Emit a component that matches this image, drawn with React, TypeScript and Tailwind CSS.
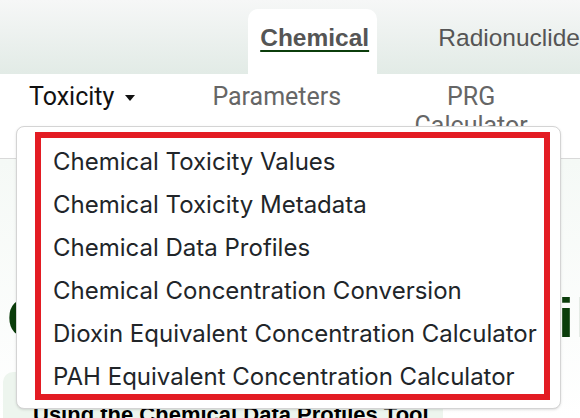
import React from 'react';

const MENU_ITEMS = [
  'Chemical Toxicity Values',
  'Chemical Toxicity Metadata',
  'Chemical Data Profiles',
  'Chemical Concentration Conversion',
  'Dioxin Equivalent Concentration Calculator',
  'PAH Equivalent Concentration Calculator',
];

export default function App() {
  return (
    <div className="relative w-[580px] h-[418px] overflow-hidden bg-white font-['Roboto',sans-serif]">
      {/* Top tabs */}
      <div className="h-[74px] bg-gradient-to-b from-[#f6f7f7] to-[#e2ebe6] flex items-end pl-[248px]">
        <div className="w-[134px] h-[65px] bg-white rounded-t-[10px] flex justify-center pt-[14px] pl-[4px]">
          <span className="font-['Liberation_Sans',sans-serif] font-bold text-[24.5px] leading-[29px] text-[#555] underline decoration-[#0b3d0b] decoration-2 underline-offset-[4px]">
            Chemical
          </span>
        </div>
        <div className="self-stretch flex items-start pt-[23px] ml-[61px] font-['Liberation_Sans',sans-serif] text-[24.5px] leading-[29px] text-[#555] whitespace-nowrap">
          Radionuclide
        </div>
      </div>

      {/* Sub nav */}
      <div className="h-[85px] bg-white border-b border-[#d9d9d9] flex items-start pt-[8px] pl-[29px] text-[25px] leading-[29px]">
        <div className="flex items-center text-[#111]">
          <span>Toxicity</span>
          <span className="ml-[11px] mt-[2px] w-0 h-0 border-l-[5px] border-r-[5px] border-t-[6px] border-l-transparent border-r-transparent border-t-[#111]" />
        </div>
        <div className="ml-[77px] text-[#666]">Parameters</div>
        <div className="ml-[60px] w-[140px] text-center text-[#666]">
          PRG
          <br />
          Calculator
        </div>
      </div>

      {/* Page content */}
      <div className="h-[259px] bg-gradient-to-b from-[#f5f9f6] to-white">
        <div className="pt-[131px] pl-[7px] font-['Liberation_Sans',sans-serif] font-bold text-[56px] leading-[56px] tracking-[2.1px] text-[#0b3d0b] whitespace-nowrap">
          Chemical Data Profiles
        </div>
        <div className="mt-[26px] ml-[3px] w-[440px] h-[80px] bg-[#edf5ee] rounded-[10px] pl-[30px] pt-[30px]">
          <div className="font-['Liberation_Sans',sans-serif] font-bold text-[22px] leading-[26px] text-black whitespace-nowrap">
            Using the Chemical Data Profiles Tool
          </div>
        </div>
      </div>

      {/* Dropdown */}
      <div className="absolute left-[16px] top-[126px] w-[545px] h-[283px] bg-white border border-[#d4d4d4] rounded-[8px] shadow-sm">
        <div className="mt-[5px] ml-[18px] w-[515px] h-[268px] border-[6px] border-[#e31c23] pl-[12px] pt-[2px] flex flex-col overflow-visible">
          {MENU_ITEMS.map((item) => (
            <div
              key={item}
              className="shrink-0 h-[43px] flex items-center font-['Inter',sans-serif] text-[24px] text-[#212529] whitespace-nowrap"
            >
              {item}
            </div>
          ))}
        </div>
      </div>
    </div>
  );
}
